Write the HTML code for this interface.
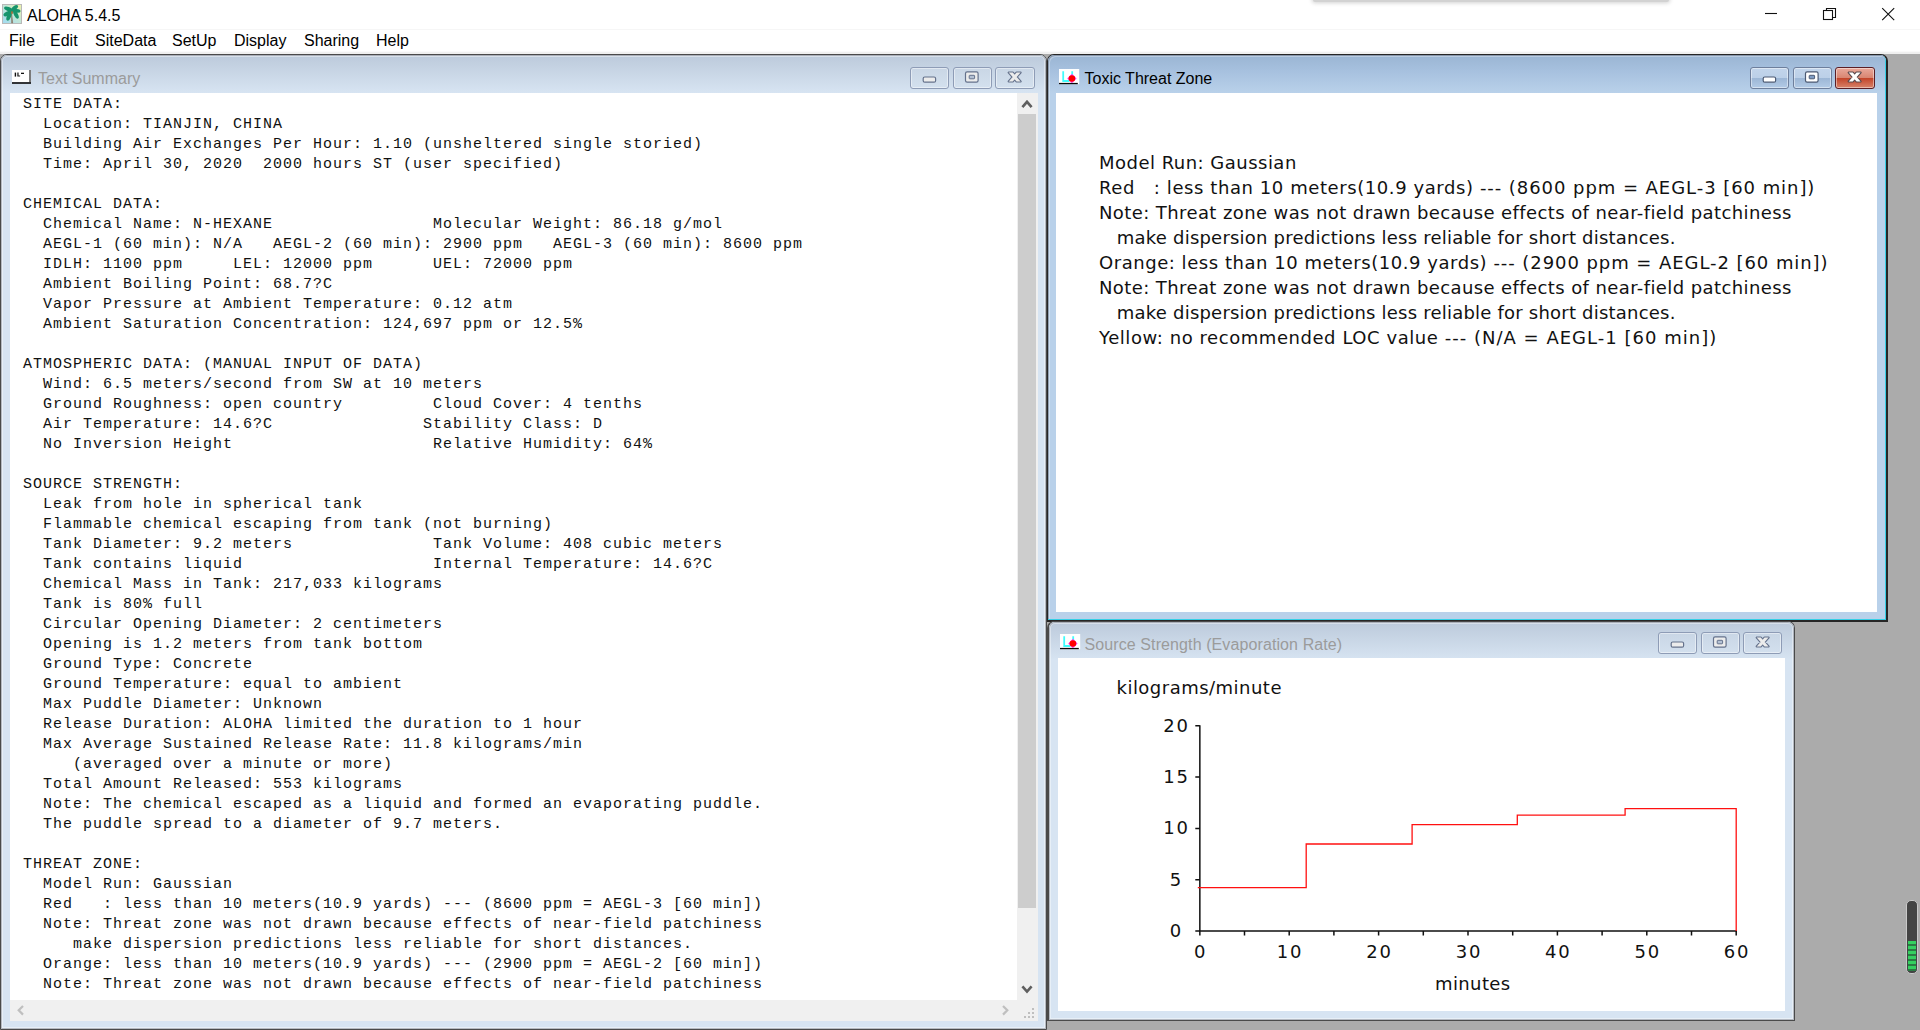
<!DOCTYPE html>
<html><head><meta charset="utf-8"><title>ALOHA 5.4.5</title>
<style>
html,body{margin:0;padding:0}
body{width:1920px;height:1030px;overflow:hidden;position:relative;background:#ababab;font-family:"Liberation Sans",sans-serif;font-size:16px;color:#000}
.abs{position:absolute}
#topbar{left:0;top:0;width:1920px;height:54px;background:#fff}
#tsep{left:0;top:29px;width:1920px;height:1px;background:#f6f6f6}
#mshadow{left:0;top:51px;width:1920px;height:3px;background:linear-gradient(#fafafa 0,#fafafa 33%,#f0f0f0 34%,#f0f0f0 100%)}
#apptitle{left:27px;top:7px;line-height:18px;white-space:pre}
.menu span{position:absolute;top:32px;line-height:18px;white-space:pre}
.win{position:absolute;box-sizing:border-box;border:1px solid #4a4a4a;border-radius:7px 7px 0 0;overflow:hidden}
.win.inact{background:#d7e4f2}
.ov{z-index:5;position:absolute;left:0;top:0;right:0;bottom:0;border-radius:6px 6px 0 0;pointer-events:none}
.inact .ov{box-shadow:inset 0 0 0 1px rgba(70,70,80,.32),inset 0 0 0 2px rgba(255,255,255,.4)}
.act .ov{box-shadow:inset -1px -1px 0 #35cfe6,inset 1px 1px 0 rgba(40,50,70,.35),inset 2px 2px 0 rgba(255,255,255,.3)}
.win.act{background:#b9d1ea}
.win .tb{position:absolute;left:0;top:0;right:0;height:38px}
.win.inact .tb{background:linear-gradient(#bccadb 0%,#d7e4f2 100%)}
.win.act .tb{background:linear-gradient(#9ab5d3 0%,#a6c0de 40%,#b9d1ea 100%)}
.win .ttl{position:absolute;line-height:18px;white-space:pre}
.win.inact .ttl{color:#9b9b9b}
.content{position:absolute;background:#fff;overflow:hidden}
.btn{position:absolute;box-sizing:border-box;width:39px;height:22px;top:12px;border:1px solid #8e9cb6;border-radius:3px;box-shadow:inset 0 0 0 1px rgba(255,255,255,.45)}
.inact .btn{background:linear-gradient(#c9d6e5,#d3e0ee)}
.act .btn{background:linear-gradient(#c2d5eb 0%,#bcd0e8 48%,#9db7d6 52%,#b3cbe6 100%);border-color:#6e7f9c}
.act .btn.close{background:linear-gradient(#e9a99b 0%,#d98672 48%,#c3452a 52%,#d8836b 100%);border-color:#5b1f26}
pre#ts{position:absolute;left:13px;top:2px;margin:0;font-family:"Liberation Mono",monospace;font-size:15px;letter-spacing:1px;line-height:20px;color:#111;white-space:pre}
</style></head><body>
<div id="topbar" class="abs"></div>
<div id="tsep" class="abs"></div>
<div id="mshadow" class="abs"></div>
<svg class="abs" style="left:2px;top:4px" width="20" height="20" viewBox="0 0 20 20"><defs><linearGradient id="pg" x1="0" y1="1" x2="1" y2="0"><stop offset="0" stop-color="#9fdaf3"/><stop offset=".55" stop-color="#c4e7d6"/><stop offset="1" stop-color="#f0f3a8"/></linearGradient></defs><rect x=".5" y=".5" width="19" height="19" fill="url(#pg)" stroke="#b9b9b9"/><path d="M9.6 9 L10.7 19 L9.6 19 Z" stroke="#86705c" stroke-width=".5" fill="#86705c"/><g fill="#16946c"><ellipse cx="6.2" cy="5" rx="4.3" ry="2" transform="rotate(20 6.2 5)"/><ellipse cx="5.4" cy="9.6" rx="4.3" ry="2.1" transform="rotate(-28 5.4 9.6)"/><ellipse cx="7" cy="12.3" rx="2.1" ry="4.6" transform="rotate(22 7 12.3)"/><ellipse cx="12.8" cy="3.9" rx="3.8" ry="2" transform="rotate(-38 12.8 3.9)"/><ellipse cx="14.6" cy="6.9" rx="4" ry="1.9" transform="rotate(6 14.6 6.9)"/><ellipse cx="14" cy="10.6" rx="2" ry="4.4" transform="rotate(-28 14 10.6)"/><circle cx="10" cy="6.8" r="2"/></g><ellipse cx="10" cy="8.6" rx="1" ry="1.7" fill="#a07040"/></svg>
<div id="apptitle" class="abs">ALOHA 5.4.5</div>
<div class="menu"><span style="left:9px">File</span><span style="left:50px">Edit</span><span style="left:95px">SiteData</span><span style="left:172px">SetUp</span><span style="left:234px">Display</span><span style="left:304px">Sharing</span><span style="left:376px">Help</span></div>

<svg class="abs" style="left:1750px;top:0" width="170" height="29" viewBox="0 0 170 29" fill="none" stroke="#111" stroke-width="1.1"><path d="M15 13.5H27"/><rect x="73.5" y="10.5" width="9" height="9"/><path d="M76.5 10.5V8.5H85.5V17.5H82.5"/><path d="M132.2 8.2L144.2 20.2M144.2 8.2L132.2 20.2"/></svg>
<div class="abs" style="left:1313px;top:-6px;width:356px;height:8px;background:#d2d2d2;box-shadow:0 0 4px 1px rgba(0,0,0,.18);border-radius:2px"></div>
<div class="abs" style="left:1906px;top:900px;width:12px;height:74px;box-sizing:border-box;border:1px solid #c9c9c9;border-radius:5px;background:#444;overflow:hidden"><div style="position:absolute;left:1px;right:1px;top:40px;height:30px;background:repeating-linear-gradient(#35d060 0,#35d060 2px,#2b7a44 2px,#2b7a44 2.5px,#35d060 2.5px,#35d060 3.5px,#2b7a44 3.5px,#2b7a44 5px)"></div></div>
<!-- Text Summary window -->
<div class="win inact" id="w1" style="left:0;top:54px;width:1047px;height:976px">
<div class="tb"></div><div class="ov"></div>
<svg style="position:absolute;left:11px;top:15px" width="20" height="15" viewBox="0 0 20 15"><rect x="0" y="0" width="17.2" height="12.3" fill="#fff"/><rect x="17" y="0" width="2" height="12.3" fill="#7a7a7a"/><rect x="0" y="12.2" width="19" height="1.6" fill="#0a0a0a"/><rect x="2.7" y="2.6" width="1.4" height="4" fill="#111"/><path d="M5.3 2.6h1.3v2.8h1.5v1.2h-2.8z" fill="#222"/><rect x="9" y="2.7" width="3" height="1.3" fill="#111"/></svg><div class="ttl" style="left:37px;top:15px">Text Summary</div>
<div class="btn" style="left:909px"><svg width="38" height="20" viewBox="0 0 38 20" style="position:absolute;left:0;top:0"><rect x="12.2" y="9" width="12.4" height="5.2" rx="1.5" fill="#ececec" stroke="#65728c" stroke-width="1.2"/></svg></div><div class="btn" style="left:952px"><svg width="38" height="20" viewBox="0 0 38 20" style="position:absolute;left:0;top:0"><rect x="11.5" y="3.9" width="12.6" height="10.2" rx="1.6" fill="#ececec" stroke="#65728c" stroke-width="1.2"/><rect x="15.2" y="7.3" width="5.4" height="3.5" rx=".6" fill="#b4c1d4" stroke="#65728c" stroke-width="1"/></svg></div><div class="btn close" style="left:994px;width:40px"><svg width="38" height="20" viewBox="0 0 38 20" style="position:absolute;left:0;top:0"><path d="M12.7 4.5H16.7L24.6 13.4H20.6ZM20.6 4.5H24.6L16.7 13.4H12.7Z" fill="#65728c" stroke="#65728c" stroke-width="2.2" stroke-linejoin="round"/><path d="M12.7 4.5H16.7L24.6 13.4H20.6ZM20.6 4.5H24.6L16.7 13.4H12.7Z" fill="#ececec"/></svg></div>
<div style="position:absolute;left:1016px;top:38px;width:21px;height:907px;background:#f0f0f0"></div>
<div style="position:absolute;left:1017px;top:59px;width:18px;height:794px;background:#cdcdcd"></div>
<div style="position:absolute;left:9px;top:945px;width:1028px;height:21px;background:#f0f0f0"></div>
<svg style="position:absolute;left:1016px;top:38px" width="20" height="907" viewBox="0 0 20 907"><path d="M5.4 14.1L10 8.8L14.6 14.1" stroke="#5f5f5f" stroke-width="2.6" fill="none"/><path d="M5.4 893.3L10 898.6L14.6 893.3" stroke="#5f5f5f" stroke-width="2.6" fill="none"/></svg>
<svg style="position:absolute;left:9px;top:945px" width="1027" height="20" viewBox="0 0 1027 20"><path d="M13 6L8.7 10.3L13 14.6" stroke="#bfbfbf" stroke-width="2.2" fill="none"/><path d="M993 6L997.3 10.3L993 14.6" stroke="#bfbfbf" stroke-width="2.2" fill="none"/><g fill="#bfbfbf"><rect x="1022" y="8" width="2" height="2"/><rect x="1022" y="12" width="2" height="2"/><rect x="1022" y="16" width="2" height="2"/><rect x="1018" y="12" width="2" height="2"/><rect x="1018" y="16" width="2" height="2"/><rect x="1014" y="16" width="2" height="2"/></g></svg>
<div class="content" id="c1" style="left:9px;top:38px;width:1007px;height:907px">
<pre id="ts">SITE DATA<span>:</span>
  Location: TIANJIN, CHINA
  Building Air Exchanges Per Hour: 1.10 (unsheltered single storied)
  Time: April 30, 2020  2000 hours ST (user specified)

CHEMICAL DATA<span>:</span>
  Chemical Name: N-HEXANE                Molecular Weight: 86.18 g/mol
  AEGL-1 (60 min): N/A   AEGL-2 (60 min): 2900 ppm   AEGL-3 (60 min): 8600 ppm
  IDLH: 1100 ppm     LEL: 12000 ppm      UEL: 72000 ppm
  Ambient Boiling Point: 68.7?C
  Vapor Pressure at Ambient Temperature: 0.12 atm
  Ambient Saturation Concentration: 124,697 ppm or 12.5%

ATMOSPHERIC DATA<span>:</span> (MANUAL INPUT OF DATA)
  Wind: 6.5 meters/second from SW at 10 meters
  Ground Roughness: open country         Cloud Cover: 4 tenths
  Air Temperature: 14.6?C               Stability Class: D
  No Inversion Height                    Relative Humidity: 64%

SOURCE STRENGTH:
  Leak from hole in spherical tank
  Flammable chemical escaping from tank (not burning)
  Tank Diameter: 9.2 meters              Tank Volume: 408 cubic meters
  Tank contains liquid                   Internal Temperature: 14.6?C
  Chemical Mass in Tank: 217,033 kilograms
  Tank is 80% full
  Circular Opening Diameter: 2 centimeters
  Opening is 1.2 meters from tank bottom
  Ground Type: Concrete
  Ground Temperature: equal to ambient
  Max Puddle Diameter: Unknown
  Release Duration: ALOHA limited the duration to 1 hour
  Max Average Sustained Release Rate: 11.8 kilograms/min
     (averaged over a minute or more)
  Total Amount Released: 553 kilograms
  Note: The chemical escaped as a liquid and formed an evaporating puddle.
  The puddle spread to a diameter of 9.7 meters.

THREAT ZONE:
  Model Run: Gaussian
  Red   : less than 10 meters(10.9 yards) --- (8600 ppm = AEGL-3 [60 min])
  Note: Threat zone was not drawn because effects of near-field patchiness
     make dispersion predictions less reliable for short distances.
  Orange: less than 10 meters(10.9 yards) --- (2900 ppm = AEGL-2 [60 min])
  Note: Threat zone was not drawn because effects of near-field patchiness</pre>
</div>
</div>

<!-- Toxic Threat Zone window -->
<div class="win act" id="w2" style="left:1047px;top:54px;width:841px;height:568px;border-color:#262626;border-width:1px 2px 2px 1px">
<div class="tb"></div><div class="ov"></div>
<svg style="position:absolute;left:10.8px;top:13.9px" width="21" height="16" viewBox="0 0 21 16"><rect x="0" y="0" width="20.2" height="15.2" fill="#fff"/><path d="M4.2 2.2V12H10.5" stroke="#3ffcfc" stroke-width="1.8" fill="none"/><path d="M13.2 2.2V6" stroke="#3ffcfc" stroke-width="1.8" fill="none"/><path d="M12.9 4.8 L17.6 9.5 L12.9 14.2 L8.2 9.5Z" fill="#ff40ff"/><circle cx="12.9" cy="9.5" r="3.3" fill="#ff0000"/><rect x="0" y="13.9" width="18.8" height="1.3" fill="#0a0a0a"/></svg><div class="ttl" style="left:36.5px;top:15px">Toxic Threat Zone</div>
<div class="btn" style="left:702px"><svg width="38" height="20" viewBox="0 0 38 20" style="position:absolute;left:0;top:0"><rect x="12.2" y="9" width="12.4" height="5.2" rx="1.5" fill="#ffffff" stroke="#4d5b74" stroke-width="1.2"/></svg></div><div class="btn" style="left:745px"><svg width="38" height="20" viewBox="0 0 38 20" style="position:absolute;left:0;top:0"><rect x="11.5" y="3.9" width="12.6" height="10.2" rx="1.6" fill="#ffffff" stroke="#4d5b74" stroke-width="1.2"/><rect x="15.2" y="7.3" width="5.4" height="3.5" rx=".6" fill="#7f9cc4" stroke="#4d5b74" stroke-width="1"/></svg></div><div class="btn close" style="left:787px;width:40px"><svg width="38" height="20" viewBox="0 0 38 20" style="position:absolute;left:0;top:0"><path d="M12.7 4.5H16.7L24.6 13.4H20.6ZM20.6 4.5H24.6L16.7 13.4H12.7Z" fill="#5a4a4f" stroke="#5a4a4f" stroke-width="2.2" stroke-linejoin="round"/><path d="M12.7 4.5H16.7L24.6 13.4H20.6ZM20.6 4.5H24.6L16.7 13.4H12.7Z" fill="#ffffff"/></svg></div>
<div class="content" id="c2" style="left:8px;top:38px;width:821px;height:519px"><div id="tox" style="position:absolute;left:43px;top:57px;font-family:'DejaVu Sans','Liberation Sans',sans-serif;font-size:18px;line-height:25px;color:#111;white-space:pre"><div style="letter-spacing:0.48px">Model Run: Gaussian</div><div><span style="letter-spacing:0.582px">Red   : less than 10 meters(10.9 yards) </span><span style="letter-spacing:0.941px">--- (8600 ppm = AEGL-3 [60 min])</span></div><div style="letter-spacing:0.4px">Note: Threat zone was not drawn because effects of near-field patchiness</div><div style="letter-spacing:0.215px">   make dispersion predictions less reliable for short distances.</div><div><span style="letter-spacing:0.541px">Orange: less than 10 meters(10.9 yards) </span><span style="letter-spacing:0.931px">--- (2900 ppm = AEGL-2 [60 min])</span></div><div style="letter-spacing:0.4px">Note: Threat zone was not drawn because effects of near-field patchiness</div><div style="letter-spacing:0.215px">   make dispersion predictions less reliable for short distances.</div><div><span style="letter-spacing:0.558px">Yellow: no recommended LOC value </span><span style="letter-spacing:1.01px">--- (N/A = AEGL-1 [60 min])</span></div></div></div>
</div>

<!-- Source Strength window -->
<div class="win inact" id="w3" style="left:1047px;top:621px;width:748px;height:400px;border-width:1px 1px 1px 2px">
<div class="tb"></div><div class="ov"></div>
<svg style="position:absolute;left:11px;top:12px" width="21" height="16" viewBox="0 0 21 16"><rect x="0" y="0" width="20.2" height="15.2" fill="#fff"/><path d="M4.2 2.2V12H10.5" stroke="#3ffcfc" stroke-width="1.8" fill="none"/><path d="M13.2 2.2V6" stroke="#3ffcfc" stroke-width="1.8" fill="none"/><path d="M12.9 4.8 L17.6 9.5 L12.9 14.2 L8.2 9.5Z" fill="#ff40ff"/><circle cx="12.9" cy="9.5" r="3.3" fill="#ff0000"/><rect x="0" y="13.9" width="18.8" height="1.3" fill="#0a0a0a"/></svg><div class="ttl" style="left:35.5px;top:14px;letter-spacing:.1px">Source Strength (Evaporation Rate)</div>
<div class="btn" style="left:609px;top:10px"><svg width="38" height="20" viewBox="0 0 38 20" style="position:absolute;left:0;top:0"><rect x="12.2" y="9" width="12.4" height="5.2" rx="1.5" fill="#ececec" stroke="#65728c" stroke-width="1.2"/></svg></div><div class="btn" style="left:651.5px;top:10px"><svg width="38" height="20" viewBox="0 0 38 20" style="position:absolute;left:0;top:0"><rect x="11.5" y="3.9" width="12.6" height="10.2" rx="1.6" fill="#ececec" stroke="#65728c" stroke-width="1.2"/><rect x="15.2" y="7.3" width="5.4" height="3.5" rx=".6" fill="#b4c1d4" stroke="#65728c" stroke-width="1"/></svg></div><div class="btn close" style="left:694px;top:10px"><svg width="38" height="20" viewBox="0 0 38 20" style="position:absolute;left:0;top:0"><path d="M12.7 4.5H16.7L24.6 13.4H20.6ZM20.6 4.5H24.6L16.7 13.4H12.7Z" fill="#65728c" stroke="#65728c" stroke-width="2.2" stroke-linejoin="round"/><path d="M12.7 4.5H16.7L24.6 13.4H20.6ZM20.6 4.5H24.6L16.7 13.4H12.7Z" fill="#ececec"/></svg></div>
<div class="content" id="c3" style="left:8.5px;top:36px;width:727px;height:353px"><svg width="728" height="353" viewBox="1057.5 658 728 353" style="position:absolute;left:0;top:0" font-family="'DejaVu Sans','Liberation Sans',sans-serif" font-size="18" fill="#111"><path d="M1199.35 725.2V935.6M1194.8 931.0H1736.4" stroke="#111" stroke-width="1.5" fill="none"/><path d="M1194.8 879.7H1199.35M1194.8 828.4H1199.35M1194.8 777.1H1199.35M1194.8 725.8H1199.35M1244.0 931.0V935.6M1288.7 931.0V935.6M1333.4 931.0V935.6M1378.1 931.0V935.6M1422.8 931.0V935.6M1467.5 931.0V935.6M1512.2 931.0V935.6M1556.9 931.0V935.6M1601.6 931.0V935.6M1646.3 931.0V935.6M1691.0 931.0V935.6M1735.7 931.0V935.6" stroke="#111" stroke-width="1.5" fill="none"/><path d="M1197.3 887.6H1305.7V844H1411.6V824.7H1516.8V815.1H1624.6V808.6H1735.7V931" stroke="#ff1010" stroke-width="1.3" fill="none"/><text x="1175" y="936.8" text-anchor="middle">0</text><text x="1175" y="885.5" text-anchor="middle">5</text><text x="1175.9" y="834.2" text-anchor="middle" letter-spacing="1.8">10</text><text x="1175.9" y="782.9" text-anchor="middle" letter-spacing="1.8">15</text><text x="1175.9" y="731.6" text-anchor="middle" letter-spacing="1.8">20</text><text x="1199.3" y="958.3" text-anchor="middle">0</text><text x="1289.6" y="958.3" text-anchor="middle" letter-spacing="1.8">10</text><text x="1379.0" y="958.3" text-anchor="middle" letter-spacing="1.8">20</text><text x="1468.4" y="958.3" text-anchor="middle" letter-spacing="1.8">30</text><text x="1557.8" y="958.3" text-anchor="middle" letter-spacing="1.8">40</text><text x="1647.2" y="958.3" text-anchor="middle" letter-spacing="1.8">50</text><text x="1736.6" y="958.3" text-anchor="middle" letter-spacing="1.8">60</text><text x="1116" y="694.2" letter-spacing="0.48">kilograms/minute</text><text x="1472.3" y="989.6" text-anchor="middle" letter-spacing="0.4">minutes</text></svg></div>
</div>
</body></html>
